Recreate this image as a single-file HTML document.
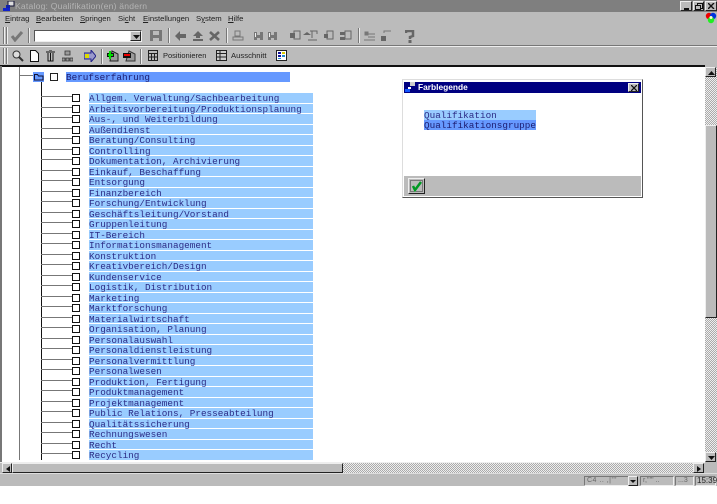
<!DOCTYPE html>
<html><head><meta charset="utf-8"><style>
html,body{margin:0;padding:0;background:#fff}
#p{position:relative;width:717px;height:504px;overflow:hidden;background:#fff;font-family:"Liberation Sans",sans-serif}
#p div,#p svg,#p span.a{position:absolute}
.m{top:13px;font-size:7.7px;line-height:11px;color:#222;white-space:nowrap}
.r{left:89px;width:224px;height:10px;background:#9cf;font:9.33px/11px "Liberation Mono",monospace;color:#2c2c86;white-space:pre}
.h{left:41px;width:31px;height:1px;background:#777}
.c{left:72px;width:6px;height:6px;border:1px solid #111;background:#fff}
.b{background:#bbb;border:1px solid;border-color:#eee #222 #222 #eee;box-sizing:border-box}
.hat{background-color:#eee;background-image:conic-gradient(#aaa 25%,#eee 0 50%,#aaa 0 75%,#eee 0);background-size:2px 2px}
.s{width:1px;background:#777;border-right:1px solid #eee}
.st{top:476px;height:10px;border:1px solid;border-color:#777 #eee #eee #777;box-sizing:border-box}
</style></head><body><div id="p">
<div style="left:0;top:0;width:717px;height:486px;background:#bbb"></div>
<div style="left:2px;top:67px;width:703px;height:395px;background:#fff"></div>
<div style="left:0;top:0;width:717px;height:12px;background:#7f7f7f"></div>
<svg style="left:2px;top:1px" width="13" height="11"><rect x="6" y="0" width="6" height="5" fill="#ddd" stroke="#113" stroke-width="1"/><path d="M1 7h7v3H1z" fill="#12c"/><path d="M4 4h4v3H4z" fill="#12a"/></svg>
<div style="left:15px;top:0;font-size:8.600px;line-height:12px;color:#b4b4b4;letter-spacing:.2px;white-space:nowrap">Katalog: Qualifikation(en) ändern</div>
<div class="b" style="left:680px;top:1px;width:12px;height:10px"><div style="left:3px;top:6px;width:5px;height:2px;background:#111"></div></div>
<div class="b" style="left:693px;top:1px;width:11px;height:10px"><div style="left:3px;top:1px;width:4px;height:4px;border:1px solid #111"></div><div style="left:1px;top:3px;width:4px;height:3px;border:1px solid #111;background:#bbb"></div></div>
<div class="b" style="left:705px;top:1px;width:12px;height:10px"><svg style="left:2px;top:1px" width="7" height="6"><path d="M0 0l6 6M6 0l-6 6" stroke="#111" stroke-width="1.4"/></svg></div>

<span class="a m" style="left:5px"><u>E</u>intrag</span>
<span class="a m" style="left:36px"><u>B</u>earbeiten</span>
<span class="a m" style="left:80px"><u>S</u>pringen</span>
<span class="a m" style="left:118px">Si<u>c</u>ht</span>
<span class="a m" style="left:143px"><u>E</u>instellungen</span>
<span class="a m" style="left:196px">S<u>y</u>stem</span>
<span class="a m" style="left:228px"><u>H</u>ilfe</span>
<svg style="left:705px;top:12px" width="12" height="12"><circle cx="4" cy="4" r="3.2" fill="#e00"/><circle cx="8" cy="4" r="3.2" fill="#03d"/><circle cx="6" cy="8" r="3.2" fill="#2e2"/><circle cx="6" cy="5.5" r="1.5" fill="#ffc"/></svg>

<!-- toolbar 1 -->
<div style="left:0;top:45px;width:717px;height:1px;background:#777"></div>
<div style="left:0;top:46px;width:717px;height:1px;background:#eee"></div>
<div class="s" style="left:3px;top:27px;height:17px"></div><div class="s" style="left:6px;top:27px;height:17px"></div>
<svg style="left:10px;top:30px" width="14" height="12"><path d="M2 6l3 4 7-8" fill="none" stroke="#777" stroke-width="3"/></svg>
<div class="s" style="left:28px;top:28px;height:15px"></div>
<div style="left:34px;top:30px;width:108px;height:12px;background:#fff;border:1px solid;border-color:#555 #eee #eee #555;box-sizing:border-box"></div>
<div class="b" style="left:130px;top:31px;width:11px;height:10px"><svg style="left:2px;top:3px" width="7" height="4"><path d="M0 0h7L3.500 4z" fill="#111"/></svg></div>
<svg style="left:150px;top:30px" width="13" height="12"><path d="M0 0h12v11H0z" fill="#777"/><path d="M3 1h6v4H3z" fill="#bbb"/><path d="M3 8h6v3H3z" fill="#bbb"/></svg>
<div class="s" style="left:168px;top:28px;height:15px"></div>
<svg style="left:175px;top:31px" width="11" height="10"><path d="M0 5l5-5v3h6v4H5v3z" fill="#666"/></svg>
<svg style="left:192px;top:31px" width="12" height="10"><path d="M6 0l5 5H8v2H4V5H1zM1 8h10v2H1z" fill="#666"/></svg>
<svg style="left:209px;top:31px" width="11" height="10"><path d="M1 1l9 8M10 1l-9 8" stroke="#666" stroke-width="2.600"/></svg>
<div class="s" style="left:226px;top:28px;height:15px"></div>
<svg style="left:232px;top:30px" width="12" height="12"><path d="M3 1h5v5H3zM1 7h10v3H1z" fill="none" stroke="#777"/></svg>
<svg style="left:253px;top:30px" width="26" height="12"><path d="M1 2h3v8H1zM7 2h3v8H7zM4 5h3v3H4zM15 2h3v8h-3zM21 2h3v8h-3zM18 5h3v3h-3z" fill="#777"/><path d="M2 3h1v4H2zM16 3h1v4h-1z" fill="#eee"/></svg>
<svg style="left:290px;top:30px" width="63" height="12"><g fill="none" stroke="#666"><path d="M4 1h6v8H4z"/><path d="M20 1h7v3M22 1v7M18 10h9"/><path d="M37 1h6v8h-6z"/><path d="M55 1h6v8h-6z"/></g><g fill="#666"><path d="M0 3h5v5H0z"/><path d="M17 2l4 3h-8z"/><path d="M34 4h4v4h-4z"/><path d="M50 2h5v3h-5zM50 7h5v3h-5z"/></g></svg>
<div class="s" style="left:358px;top:28px;height:15px"></div>
<svg style="left:364px;top:30px" width="29" height="12"><path d="M1 2h3v3H1zM0 10h11" stroke="#777" fill="#777"/><path d="M4 4h7M4 7h7" stroke="#777"/><path d="M17 6h5v5h-5z" fill="#666"/><path d="M20 3V1h7" stroke="#777" fill="none"/></svg>
<svg style="left:405px;top:30px" width="10" height="13"><path d="M1 3V1h7v5L5 7v2" fill="none" stroke="#666" stroke-width="2.500"/><path d="M3.500 10h3v3h-3z" fill="#666"/></svg>

<!-- toolbar 2 -->
<div class="s" style="left:3px;top:48px;height:16px"></div><div class="s" style="left:6px;top:48px;height:16px"></div>
<svg style="left:12px;top:50px" width="12" height="12"><circle cx="4.500" cy="4.500" r="3.500" fill="#ddd" stroke="#333"/><path d="M7 7l4 4" stroke="#333" stroke-width="2"/></svg>
<svg style="left:30px;top:50px" width="9" height="12"><path d="M.5.500h5l3 3v8h-8z" fill="#fff" stroke="#111"/></svg>
<svg style="left:46px;top:50px" width="10" height="12"><path d="M0 2h9M3 0h3M2 3v8h5V3M4.500 3v8" fill="none" stroke="#111"/></svg>
<svg style="left:62px;top:50px" width="11" height="12"><path d="M3 1h5v4H3zM0 8h3v3H0zM4 8h3v3H4zM8 8h3v3H8z" fill="#9a9a9a" stroke="#333" stroke-width=".8"/></svg>
<svg style="left:84px;top:50px" width="12" height="12"><path d="M7 0l5 6-5 6V9H0V3h7z" fill="#99c" stroke="#228"/><path d="M1 4h4v4H1z" fill="#dd0"/></svg>
<div class="s" style="left:101px;top:49px;height:15px"></div>
<svg style="left:107px;top:50px" width="12" height="12"><path d="M5 1l6 3v7H3z" fill="#999" stroke="#222"/><path d="M0 3h7v4H0z" fill="#111"/><path d="M3 1v8M1 5h5" stroke="#0d0" stroke-width="2"/></svg>
<svg style="left:123px;top:50px" width="13" height="12"><path d="M6 1l6 3v7H3z" fill="#999" stroke="#333"/><path d="M0 3h8v5H0z" fill="#111"/><path d="M1 5h6" stroke="#e00" stroke-width="2"/></svg>
<div class="s" style="left:140px;top:49px;height:15px"></div>
<svg style="left:148px;top:50px" width="10" height="11"><path d="M.5.500h9v10h-9zM.5 3.500h9M.5 7h9M3.500 3v8M6.500 3v8" fill="#bbb" stroke="#222"/></svg>
<span class="a" style="left:163px;top:50px;font-size:7.500px;line-height:12px;color:#222;white-space:nowrap">Positionieren</span>
<svg style="left:216px;top:50px" width="11" height="11"><path d="M.5.500h10v10H.5zM.5 3.500h10M.5 7h10M4 .5v10" fill="#ccc" stroke="#222"/></svg>
<span class="a" style="left:231px;top:50px;font-size:7.700px;line-height:12px;color:#222;white-space:nowrap">Ausschnitt</span>
<svg style="left:276px;top:50px" width="11" height="11"><path d="M.5.500h10v10H.5z" fill="#fff" stroke="#222"/><path d="M2 2h3v2H2zM2 5h3v2H2z" fill="#119"/><path d="M6 2h3v2H6z" fill="#dc0"/><path d="M6 5h3v2H6zM2 8h3v1H2z" fill="#28c"/></svg>

<!-- content -->
<div style="left:0;top:65px;width:705px;height:2px;background:#111"></div>
<div style="left:0;top:66px;width:2px;height:396px;background:#777"></div>
<div style="left:19px;top:67px;width:1px;height:393px;background:#777"></div>
<div style="left:19px;top:75px;width:14px;height:1px;background:#777"></div>
<div style="left:41px;top:82px;width:1px;height:378px;background:#111"></div>
<div style="left:33px;top:72px;width:11px;height:10px;background:#69f"></div>
<svg style="left:34px;top:73px" width="10" height="8"><path d="M.5 7V1.500h3l1 1.500h4.500v4z" fill="none" stroke="#113"/></svg>
<div style="left:50px;top:73px;width:6px;height:6px;border:1px solid #222;background:#fff"></div>
<div style="left:66px;top:72px;width:224px;height:10px;background:#69f;font:9.33px/11px 'Liberation Mono',monospace;color:#1c1c70">Berufserfahrung</div>

<div class="r" style="top:93px">Allgem. Verwaltung/Sachbearbeitung</div><div class="h" style="top:96px"></div><div class="c" style="top:94px"></div>
<div class="r" style="top:104px;height:9px">Arbeitsvorbereitung/Produktionsplanung</div><div class="h" style="top:107px"></div><div class="c" style="top:105px"></div>
<div class="r" style="top:114px">Aus-, und Weiterbildung</div><div class="h" style="top:117px"></div><div class="c" style="top:115px"></div>
<div class="r" style="top:125px;height:9px">Außendienst</div><div class="h" style="top:128px"></div><div class="c" style="top:126px"></div>
<div class="r" style="top:135px">Beratung/Consulting</div><div class="h" style="top:138px"></div><div class="c" style="top:136px"></div>
<div class="r" style="top:146px;height:9px">Controlling</div><div class="h" style="top:149px"></div><div class="c" style="top:147px"></div>
<div class="r" style="top:156px">Dokumentation, Archivierung</div><div class="h" style="top:159px"></div><div class="c" style="top:157px"></div>
<div class="r" style="top:167px;height:9px">Einkauf, Beschaffung</div><div class="h" style="top:170px"></div><div class="c" style="top:168px"></div>
<div class="r" style="top:177px">Entsorgung</div><div class="h" style="top:180px"></div><div class="c" style="top:178px"></div>
<div class="r" style="top:188px;height:9px">Finanzbereich</div><div class="h" style="top:191px"></div><div class="c" style="top:189px"></div>
<div class="r" style="top:198px">Forschung/Entwicklung</div><div class="h" style="top:201px"></div><div class="c" style="top:199px"></div>
<div class="r" style="top:209px;height:9px">Geschäftsleitung/Vorstand</div><div class="h" style="top:212px"></div><div class="c" style="top:210px"></div>
<div class="r" style="top:219px">Gruppenleitung</div><div class="h" style="top:222px"></div><div class="c" style="top:220px"></div>
<div class="r" style="top:230px;height:9px">IT-Bereich</div><div class="h" style="top:233px"></div><div class="c" style="top:231px"></div>
<div class="r" style="top:240px">Informationsmanagement</div><div class="h" style="top:243px"></div><div class="c" style="top:241px"></div>
<div class="r" style="top:251px;height:9px">Konstruktion</div><div class="h" style="top:254px"></div><div class="c" style="top:252px"></div>
<div class="r" style="top:261px">Kreativbereich/Design</div><div class="h" style="top:264px"></div><div class="c" style="top:262px"></div>
<div class="r" style="top:272px;height:9px">Kundenservice</div><div class="h" style="top:275px"></div><div class="c" style="top:273px"></div>
<div class="r" style="top:282px">Logistik, Distribution</div><div class="h" style="top:285px"></div><div class="c" style="top:283px"></div>
<div class="r" style="top:293px;height:9px">Marketing</div><div class="h" style="top:296px"></div><div class="c" style="top:294px"></div>
<div class="r" style="top:303px">Marktforschung</div><div class="h" style="top:306px"></div><div class="c" style="top:304px"></div>
<div class="r" style="top:314px;height:9px">Materialwirtschaft</div><div class="h" style="top:317px"></div><div class="c" style="top:315px"></div>
<div class="r" style="top:324px">Organisation, Planung</div><div class="h" style="top:327px"></div><div class="c" style="top:325px"></div>
<div class="r" style="top:335px;height:9px">Personalauswahl</div><div class="h" style="top:338px"></div><div class="c" style="top:336px"></div>
<div class="r" style="top:345px">Personaldienstleistung</div><div class="h" style="top:348px"></div><div class="c" style="top:346px"></div>
<div class="r" style="top:356px;height:9px">Personalvermittlung</div><div class="h" style="top:359px"></div><div class="c" style="top:357px"></div>
<div class="r" style="top:366px">Personalwesen</div><div class="h" style="top:369px"></div><div class="c" style="top:367px"></div>
<div class="r" style="top:377px;height:9px">Produktion, Fertigung</div><div class="h" style="top:380px"></div><div class="c" style="top:378px"></div>
<div class="r" style="top:387px">Produktmanagement</div><div class="h" style="top:390px"></div><div class="c" style="top:388px"></div>
<div class="r" style="top:398px;height:9px">Projektmanagement</div><div class="h" style="top:401px"></div><div class="c" style="top:399px"></div>
<div class="r" style="top:408px">Public Relations, Presseabteilung</div><div class="h" style="top:411px"></div><div class="c" style="top:409px"></div>
<div class="r" style="top:419px;height:9px">Qualitätssicherung</div><div class="h" style="top:422px"></div><div class="c" style="top:420px"></div>
<div class="r" style="top:429px">Rechnungswesen</div><div class="h" style="top:432px"></div><div class="c" style="top:430px"></div>
<div class="r" style="top:440px;height:9px">Recht</div><div class="h" style="top:443px"></div><div class="c" style="top:441px"></div>
<div class="r" style="top:450px">Recycling</div><div class="h" style="top:453px"></div><div class="c" style="top:451px"></div>

<!-- dialog -->
<div style="left:402px;top:79px;width:241px;height:119px;background:#fff;border:1px solid;border-color:#ddd #555 #555 #ddd;box-sizing:border-box"></div>
<div style="left:404px;top:82px;width:237px;height:11px;background:#000080"></div>
<svg style="left:405px;top:82px" width="11" height="11"><rect x="5" y="0" width="5" height="4" fill="#ccc"/><path d="M0 7h5v3H0z" fill="#15f"/><path d="M3 5h3v2H3z" fill="#fff"/></svg>
<span class="a" style="left:418px;top:82px;font-size:8.400px;line-height:11px;font-weight:bold;color:#fff;white-space:nowrap">Farblegende</span>
<div class="b" style="left:628px;top:83px;width:11px;height:9px"><svg style="left:2px;top:1px" width="6" height="6"><path d="M0 0l6 6M6 0L0 6" stroke="#111" stroke-width="1.300"/></svg></div>
<div style="left:424px;top:110px;width:112px;height:10px;background:#9cf;font:9.33px/11px 'Liberation Mono',monospace;color:#2c2c86">Qualifikation</div>
<div style="left:424px;top:120px;width:112px;height:10px;background:#69f;font:9.33px/11px 'Liberation Mono',monospace;color:#1c1c70;white-space:nowrap">Qualifikationsgruppe</div>
<div style="left:404px;top:176px;width:237px;height:20px;background:#bbb"></div>
<div class="b" style="left:408px;top:178px;width:17px;height:16px"><svg style="left:1px;top:1px" width="13" height="12"><rect x=".5" y=".5" width="12" height="11" fill="none" stroke="#333" stroke-dasharray="1 1"/><path d="M3 6l2 4 6-8" fill="none" stroke="#092" stroke-width="2.500"/></svg></div>

<!-- vertical scrollbar -->
<div class="hat" style="left:705px;top:67px;width:12px;height:386px"></div>
<div class="b" style="left:705px;top:67px;width:11px;height:10px"><svg style="left:2px;top:3px" width="7" height="4"><path d="M3.500 0L7 4H0z" fill="#111"/></svg></div>
<div class="b" style="left:705px;top:125px;width:12px;height:193px"></div>
<div class="b" style="left:705px;top:452px;width:11px;height:10px"><svg style="left:2px;top:3px" width="7" height="4"><path d="M0 0h7L3.500 4z" fill="#111"/></svg></div>

<!-- horizontal scrollbar -->
<div style="left:0;top:462px;width:705px;height:1px;background:#eee"></div>
<div class="hat" style="left:2px;top:463px;width:692px;height:10px"></div>
<div class="b" style="left:2px;top:463px;width:10px;height:10px"><svg style="left:3px;top:2px" width="4" height="6"><path d="M4 0v6L0 3z" fill="#111"/></svg></div>
<div class="b" style="left:12px;top:463px;width:331px;height:10px"></div>
<div class="b" style="left:693px;top:463px;width:11px;height:10px"><svg style="left:3px;top:2px" width="4" height="6"><path d="M0 0v6l4-3z" fill="#111"/></svg></div>
<div style="left:0;top:473px;width:717px;height:1px;background:#ddd"></div>

<!-- status bar -->
<div class="st" style="left:584px;top:476px;width:54px"><span class="a" style="left:2px;top:0;font-size:7px;line-height:8px;color:#666;letter-spacing:.5px;white-space:nowrap">C4 ..  ,|'''</span></div>
<div class="b" style="left:628px;top:476px;width:10px;height:10px"><svg style="left:1px;top:3px" width="6" height="3"><path d="M0 0h6L3 3z" fill="#111"/></svg></div>
<div class="st" style="left:640px;width:34px"><span class="a" style="left:2px;top:0;font-size:7px;line-height:8px;color:#666;white-space:nowrap">r,'''''  ..</span></div>
<div class="st" style="left:675px;width:19px"><span class="a" style="left:2px;top:0;font-size:7px;line-height:8px;color:#666;white-space:nowrap">...3</span></div>
<div class="st" style="left:695px;width:21px"><span class="a" style="left:1px;top:-1px;font-size:8px;line-height:10px;color:#222;white-space:nowrap">15:39</span></div>
</div></body></html>
